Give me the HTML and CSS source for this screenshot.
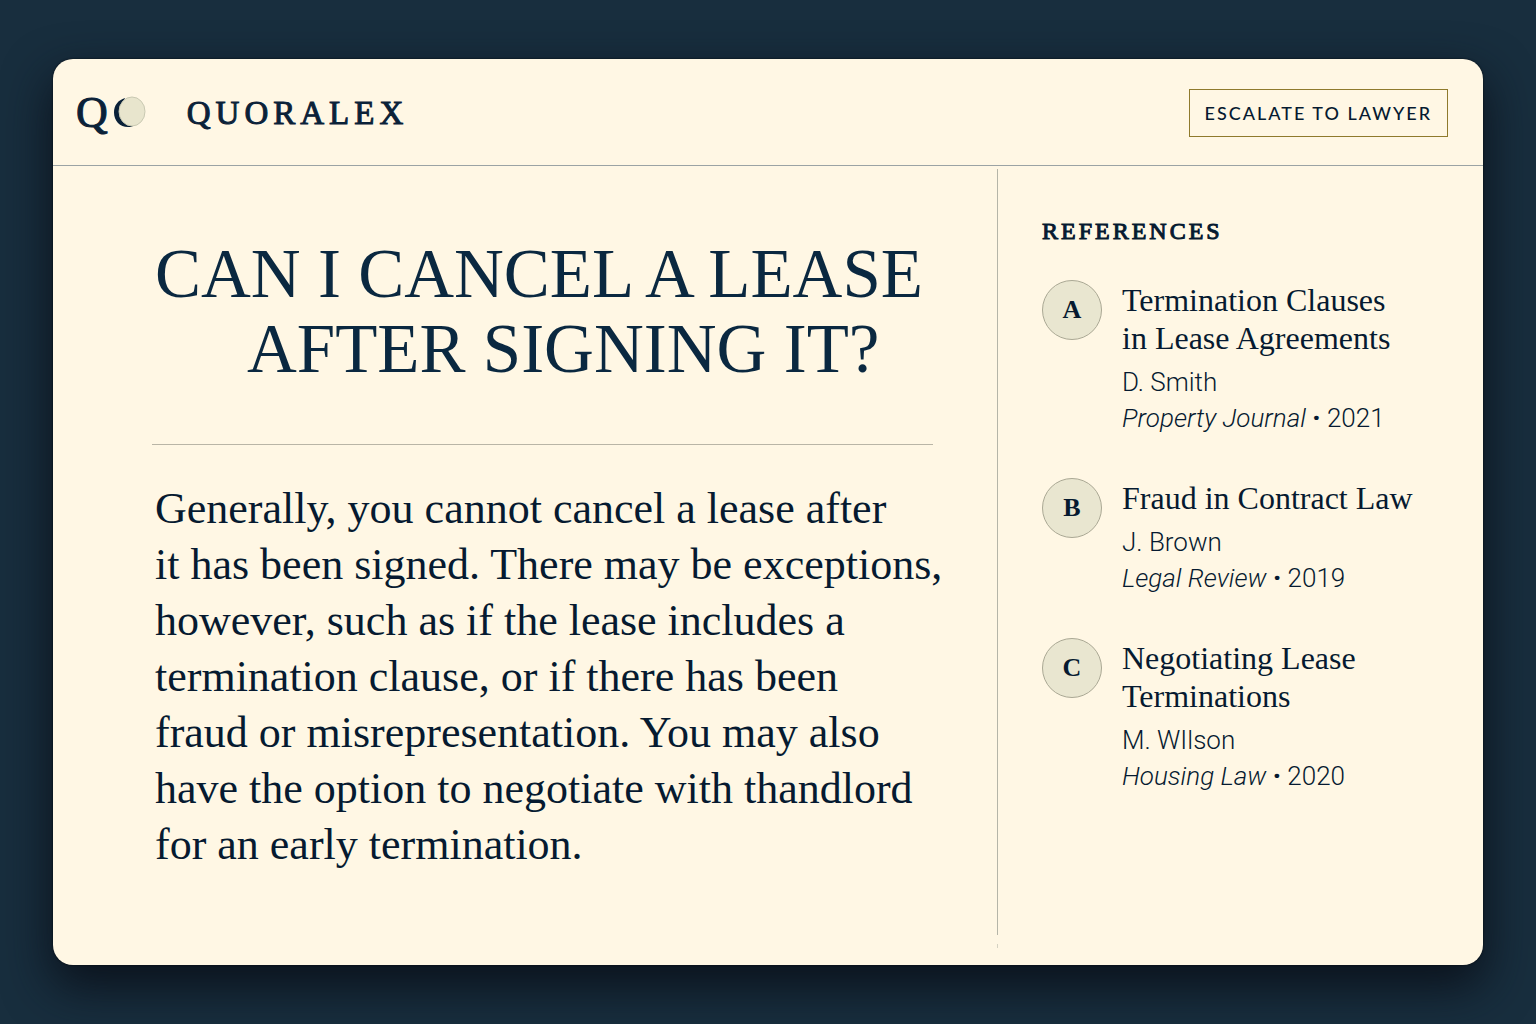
FILE: index.html
```html
<!DOCTYPE html>
<html lang="en">
<head>
<meta charset="utf-8">
<meta name="viewport" content="width=device-width, initial-scale=1">
<title>Quoralex</title>
<link rel="stylesheet" href="styles.css">
</head>
<body>
<div class="card">
  <header class="topbar">
    <div class="brand">
      <div class="mark">
        <span class="mark-letter">Q</span>
        <svg class="mark-moon" width="34" height="34" viewBox="0 0 34 34" aria-hidden="true">
          <path d="M13 2C6 4 2 9.500 2 16.500 2 25 8 31 16 31c2.500 0 4.500-.5 5.500-1.500L12 25 9 13z" fill="#0a2138"/>
          <ellipse cx="20" cy="15.500" rx="13" ry="14.500" fill="#e8e5cd" stroke="#c9c9b2"/>
        </svg>
      </div>
      <span class="wordmark">QUORALEX</span>
    </div>
    <button class="escalate" type="button">ESCALATE TO LAWYER</button>
  </header>
  <div class="content">
    <main class="answer">
      <h1 class="question">CAN I CANCEL A LEASE <span class="question-turn">AFTER SIGNING IT?</span></h1>
      <hr class="rule">
      <p class="answer-text">Generally, you cannot cancel a lease after<br>
      it has been signed. There may be exceptions,<br>
      however, such as if the lease includes a<br>
      termination clause, or if there has been<br>
      fraud or misrepresentation. You may also<br>
      have the option to negotiate with thandlord<br>
      for an early termination.</p>
    </main>
    <div class="divider"></div>
    <aside class="references">
      <h2 class="references-heading">REFERENCES</h2>
      <ol class="reference-list">
        <li class="reference">
          <span class="badge">A</span>
          <div class="details">
            <h3 class="title">Termination Clauses<br>in Lease Agreements</h3>
            <p class="meta">D. Smith</p>
            <p class="meta"><cite>Property Journal</cite> <b class="dot">·</b> 2021</p>
          </div>
        </li>
        <li class="reference">
          <span class="badge">B</span>
          <div class="details">
            <h3 class="title">Fraud in Contract Law</h3>
            <p class="meta">J. Brown</p>
            <p class="meta"><cite>Legal Review</cite> <b class="dot">·</b> 2019</p>
          </div>
        </li>
        <li class="reference">
          <span class="badge">C</span>
          <div class="details">
            <h3 class="title">Negotiating Lease<br>Terminations</h3>
            <p class="meta">M. WIlson</p>
            <p class="meta"><cite>Housing Law</cite> <b class="dot">·</b> 2020</p>
          </div>
        </li>
      </ol>
    </aside>
  </div>
</div>
</body>
</html>
```
FILE: styles.css
```css
* { box-sizing: border-box; }

body {
  margin: 0;
  min-height: 100vh;
  padding: 59px 53px;
  display: flex;
  background: #182e3e;
  color: #061a30;
  font-family: "Liberation Serif", "Times New Roman", serif;
}

h1, h2, h3, p, ol { margin: 0; padding: 0; font-weight: 400; }

.card {
  flex: 1;
  display: flex;
  flex-direction: column;
  background: #fff7e4;
  border-radius: 20px;
  box-shadow: 0 0 2px #03080f, 0 20px 48px 2px #0b121c;
}

.topbar {
  display: flex;
  align-items: center;
  justify-content: space-between;
  height: 107px;
  padding: 2px 35px 0 23px;
  border-bottom: 1px solid #9ba3a4;
}

.brand { display: flex; align-items: center; gap: 41px; }
.mark { display: flex; align-items: center; gap: 4px; }
.mark-letter { font-size: 44px; line-height: 48px; color: #0a2138; -webkit-text-stroke: 1px #0a2138; }
.mark-moon { display: block; }
.wordmark { font-size: 33px; line-height: 48px; letter-spacing: 5px; color: #0a2138; -webkit-text-stroke: 1px #0a2138; }

.escalate {
  height: 48px;
  padding: 0 15px;
  border: 1px solid #8f7a2c;
  background: transparent;
  color: #061a30;
  font: 500 18px/24px Lato, sans-serif;
  letter-spacing: 2px;
  white-space: nowrap;
}

.content {
  flex: 1;
  display: grid;
  grid-template-columns: minmax(0, 1fr) 1px 485px;
}

.answer { padding: 71px 64px 64px 99px; }
.question, .answer-text { padding-left: 3px; white-space: nowrap; }
.question { font-size: 69px; line-height: 75px; color: #0a2840; }
.question-turn { display: block; padding-left: 92px; }
.rule { height: 1px; margin: 57px 0 36px; border: 0; background: #b9b5a6; }
.answer-text { font-size: 44px; line-height: 56px; }

.divider {
  margin: 3px 0 17px;
  background: linear-gradient(#b5b5a8, #b5b5a8) top / 100% calc(100% - 13px) no-repeat,
    linear-gradient(#d5d2c2, #d5d2c2) bottom / 100% 4px no-repeat;
}

.references { padding: 50px 24px 50px 44px; }
.references-heading { font-size: 24px; line-height: 30px; letter-spacing: 3px; -webkit-text-stroke: 1px #061a30; }
.reference-list { display: grid; gap: 42px; margin-top: 34px; list-style: none; }
.reference { display: flex; align-items: flex-start; gap: 20px; }
.badge {
  flex: none;
  display: grid;
  place-items: center;
  width: 60px;
  height: 60px;
  border: 1px solid #aaa894;
  border-radius: 50%;
  background: #e9e6d0;
  font-size: 26px;
  font-weight: 700;
}
.title { padding: 1px 0 7px; font-size: 32px; line-height: 38px; white-space: nowrap; }
.meta { font: 300 26px/36px Roboto, sans-serif; white-space: nowrap; }
.dot { font-weight: 900; }
```
